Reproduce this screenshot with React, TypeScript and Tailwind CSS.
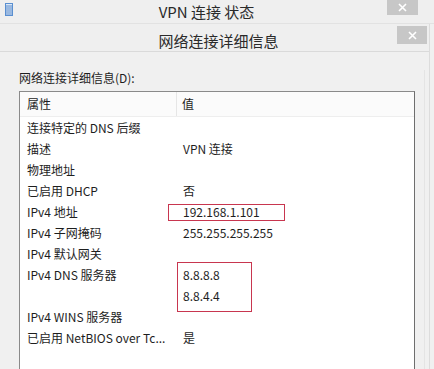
import React from "react";

const CloseBtn = ({ className }: { className: string }) => (
  <div className={"flex items-center justify-center bg-[#c7c7c7] " + className}>
    <svg width="9" height="9" viewBox="0 0 9 9">
      <path d="M1 1 L8 8 M8 1 L1 8" stroke="#ffffff" strokeWidth="1.6" />
    </svg>
  </div>
);

const rows: [string, string][] = [
  ["连接特定的 DNS 后缀", ""],
  ["描述", "VPN 连接"],
  ["物理地址", ""],
  ["已启用 DHCP", "否"],
  ["IPv4 地址", "192.168.1.101"],
  ["IPv4 子网掩码", "255.255.255.255"],
  ["IPv4 默认网关", ""],
  ["IPv4 DNS 服务器", "8.8.8.8"],
  ["", "8.8.4.4"],
  ["IPv4 WINS 服务器", ""],
  ["已启用 NetBIOS over Tc...", "是"],
];

export default function App() {
  return (
    <div
      className="relative w-[434px] h-[369px] overflow-hidden bg-[#f0f0f0] text-[#1e1e1e]"
      style={{ fontFamily: '"Noto Sans CJK SC", "Noto Sans", sans-serif' }}
    >
      {/* outer title bar */}
      <div className="flex h-[24px] items-start border-b border-[#e2e2e2] bg-[#efefef]">
        <div className="ml-[5px] mt-[3px]">
          <svg width="8" height="13" viewBox="0 0 8 13">
            <rect x="0" y="0" width="8" height="13" fill="#5a8fd0" />
            <rect x="1" y="1" width="6" height="11" fill="#dbe8f7" />
            <path d="M1 3h6M1 5h6M1 7h6M1 9h6M1 11h6" stroke="#4a7fc4" strokeWidth="0.9" />
          </svg>
        </div>
        <div className="flex-1 pl-[13px] text-center text-[15px] leading-[24px] text-[#2a2a2a]">
          VPN 连接 状态
        </div>
        <CloseBtn className="mr-[16px] h-[15px] w-[31px]" />
      </div>

      {/* inner window */}
      <div className="mr-[4px] border-r border-[#dcdcdc]">
        <div className="flex h-[28px] items-start border-b border-[#dadada] bg-[#efefef]">
          <div className="flex-1 pl-[40px] pt-[3px] text-center text-[15px] leading-[28px] text-[#2a2a2a]">
            网络连接详细信息
          </div>
          <CloseBtn className="mr-[2px] mt-[2px] h-[18px] w-[30px]" />
        </div>

        <div className="h-[320px] border-r border-[#e4e4e4] mr-[4px] pl-[19px]">
          <div className="mt-[18px] text-[12px] leading-[16px]">网络连接详细信息(D):</div>
          <div className="mt-[5px] h-[300px] w-[396px] border border-[#8a8a8a] border-r-[#6e6e6e] bg-white">
            <div className="flex h-[25px] border-b border-[#eeeeee] bg-[#fbfbfb] text-[12px] leading-[24px]">
              <div className="w-[157px] border-r border-[#e6e6e6] pl-[7px]">属性</div>
              <div className="pl-[5px]">值</div>
            </div>
            {rows.map(([k, v], i) => (
              <div key={i} className="flex h-[21px] text-[12px] leading-[21px]">
                <div className="w-[157px] pl-[7px] whitespace-nowrap">{k}</div>
                <div className="pl-[6px] whitespace-nowrap">{v}</div>
              </div>
            ))}
          </div>
        </div>
      </div>

      {/* red annotation boxes */}
      <div className="absolute left-[168px] top-[204px] h-[17px] w-[117px] border border-[#c8364f]" />
      <div className="absolute left-[177px] top-[262px] h-[50px] w-[75px] border border-[#c8364f]" />
    </div>
  );
}
